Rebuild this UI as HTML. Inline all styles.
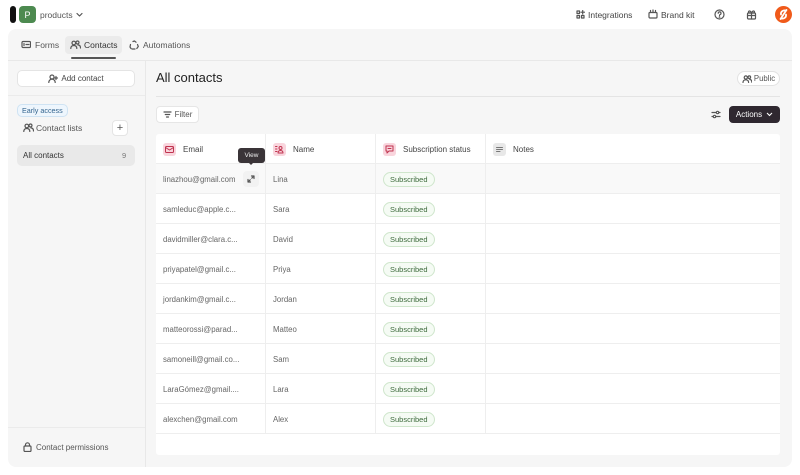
<!DOCTYPE html>
<html><head><meta charset="utf-8"><style>
*{box-sizing:border-box;margin:0;padding:0}
body{width:800px;height:475px;background:#fff;font-family:"Liberation Sans",sans-serif;color:#333;font-size:8px;position:relative;overflow:hidden}
.a{position:absolute}
svg{display:block}
.ic{fill:none;stroke:#555;stroke-width:1.2;stroke-linecap:round;stroke-linejoin:round}
.panel{left:8px;top:29px;width:784px;height:438px;background:#f6f6f6;border-radius:8px}
.cell{position:absolute;height:30px;display:flex;align-items:center;font-size:7.8px;color:#666;border-bottom:1px solid #eee;padding-top:2px}
.badge{border:1px solid #cfe6cc;background:#f5fbf4;color:#3d6b3c;border-radius:9px;padding:2px 6px;font-size:7.5px}
.hic{width:13px;height:13px;border-radius:3px;background:#f9d5dd;display:flex;align-items:center;justify-content:center;margin-right:7px}
</style></head><body>
<div class="a" style="left:10px;top:6px;width:6px;height:17px;background:#111;border-radius:3px"></div>
<div class="a" style="left:19px;top:6px;width:17px;height:17px;background:#4d8a50;border-radius:4px;color:#fff;font-size:9px;display:flex;align-items:center;justify-content:center">P</div>
<div class="a" style="left:40px;top:10px;font-size:8.5px;color:#555">products</div>
<svg class="a ic" style="left:76px;top:12px" width="7" height="6"><path d="M1 1.5l2.5 2.5 2.5-2.5"/></svg>
<svg class="a ic" style="left:576px;top:10px" width="9" height="9"><rect x="1" y="1" width="2.5" height="2.5"/><rect x="1" y="5.5" width="2.5" height="2.5"/><rect x="5.5" y="5.5" width="2.5" height="2.5"/><path d="M6.7 0.5v3.5M5 2.2h3.5"/></svg>
<div class="a" style="left:588px;top:10px;font-size:8.5px;color:#444">Integrations</div>
<svg class="a ic" style="left:648px;top:9px" width="10" height="10"><rect x="1" y="3.5" width="8" height="5.5" rx="1"/><path d="M2.5 3.5v-2M5 3.5v-2.5M7.5 3.5v-2"/></svg>
<div class="a" style="left:661px;top:10px;font-size:8.5px;color:#444">Brand kit</div>
<svg class="a ic" style="left:714px;top:9px" width="11" height="11"><circle cx="5.5" cy="5.5" r="4.5"/><path d="M4.2 4.3a1.4 1.4 0 1 1 1.9 1.3c-.5.2-.6.5-.6 1"/><circle cx="5.5" cy="8.2" r=".3"/></svg>
<svg class="a ic" style="left:746px;top:9px" width="11" height="11"><rect x="1.5" y="4" width="8" height="6" rx="1"/><path d="M5.5 4v6M1.5 6.5h8M5.5 4c-1-2.5-3-2.5-3-1s3 1 3 1c1-2.5 3-2.5 3-1s-3 1-3 1"/></svg>
<div class="a" style="left:775px;top:6px;width:17px;height:17px;border-radius:50%;background:#f05a1a"></div>
<svg class="a" style="left:775px;top:6px" width="17" height="17"><path d="M11 4.5C8 4 5.5 5.5 6 8.5M6 12.5c3 .5 5.5-1 5-4M11.5 4L5.5 13" fill="none" stroke="#fff" stroke-width="1.8" stroke-linecap="round"/></svg>

<div class="a panel"></div>
<svg class="a ic" style="left:21px;top:40px" width="10" height="9"><rect x="1" y="1.5" width="8.5" height="6" rx="1"/><path d="M3 3.5v2M5 4.5h3"/></svg>
<div class="a" style="left:35px;top:40px;font-size:8.5px;color:#555">Forms</div>
<div class="a" style="left:65px;top:36px;width:57px;height:18px;background:#ebebeb;border-radius:4px"></div>
<svg class="a ic" style="left:70px;top:40px" width="11" height="9"><circle cx="3.8" cy="3" r="1.8"/><path d="M0.8 8.5c0-2 1.3-3 3-3s3 1 3 3"/><circle cx="7.5" cy="2.5" r="1.5"/><path d="M8 5c1.5 0 2.5 1 2.5 3"/></svg>
<div class="a" style="left:84px;top:40px;font-size:8.5px;color:#333">Contacts</div>
<div class="a" style="left:71px;top:57px;width:45px;height:2px;background:#555;border-radius:1px"></div>
<svg class="a ic" style="left:129px;top:40px" width="10" height="10"><path d="M4 1.5l1.5-.5 1.5 1.2M8.5 4.5l.8 2-1.5 2M2 8.5l-1-1.5.5-2.5M3 9h3"/></svg>
<div class="a" style="left:143px;top:40px;font-size:8.5px;color:#555">Automations</div>
<div class="a" style="left:8px;top:60px;width:784px;height:1px;background:#e8e8e8"></div>
<div class="a" style="left:145px;top:61px;width:1px;height:406px;background:#e8e8e8"></div>
<div class="a" style="left:17px;top:70px;width:118px;height:17px;background:#fff;border:1px solid #e4e4e4;border-radius:5px;display:flex;align-items:center;justify-content:center;font-size:8px;color:#444"><svg class="ic" width="10" height="9" style="margin-right:3px"><circle cx="4" cy="3" r="2"/><path d="M0.8 8.5c0-2 1.5-3.3 3.2-3.3s3.2 1.3 3.2 3.3M8 2.5v3M6.5 4h3"/></svg>Add contact</div>
<div class="a" style="left:8px;top:95px;width:137px;height:1px;background:#ebebeb"></div>
<div class="a" style="left:17px;top:104px;padding:1px 4px;border:1px solid #cfe3f3;background:#eef6fd;color:#34658f;border-radius:5px;font-size:7.2px">Early access</div>
<svg class="a ic" style="left:23px;top:123px" width="11" height="9"><circle cx="3.8" cy="3" r="1.8"/><path d="M0.8 8.5c0-2 1.3-3 3-3s3 1 3 3"/><circle cx="7.5" cy="2.5" r="1.5"/><path d="M8 5c1.5 0 2.5 1 2.5 3"/></svg>
<div class="a" style="left:36px;top:123px;font-size:8.5px;color:#555">Contact lists</div>
<div class="a" style="left:112px;top:120px;width:16px;height:16px;background:#fff;border:1px solid #e4e4e4;border-radius:4px;display:flex;align-items:center;justify-content:center;font-size:11px;color:#555">+</div>
<div class="a" style="left:17px;top:145px;width:118px;height:21px;background:#e9e9e9;border-radius:5px"></div>
<div class="a" style="left:23px;top:151px;font-size:8px;color:#333">All contacts</div>
<div class="a" style="left:122px;top:151px;font-size:7.5px;color:#777">9</div>
<div class="a" style="left:8px;top:427px;width:137px;height:1px;background:#ebebeb"></div>
<svg class="a ic" style="left:23px;top:442px" width="9" height="10"><rect x="1" y="4" width="7" height="5.5" rx="1"/><path d="M2.5 4V2.8a2 2 0 0 1 4 0V4"/></svg>
<div class="a" style="left:36px;top:443px;font-size:8px;color:#555">Contact permissions</div>
<div class="a" style="left:156px;top:70px;font-size:13px;color:#222">All contacts</div>
<div class="a" style="left:737px;top:71px;width:43px;height:15px;background:#fff;border:1px solid #e2e2e2;border-radius:8px;display:flex;align-items:center;justify-content:center;font-size:7.8px;color:#555"><svg class="ic" width="10" height="8" style="margin-right:2px"><circle cx="3.8" cy="2.5" r="1.6"/><path d="M1 7.5c0-1.8 1.2-2.7 2.8-2.7s2.8.9 2.8 2.7"/><circle cx="7.3" cy="2.2" r="1.3"/><path d="M7.8 4.5c1.2 0 2 .9 2 2.7"/></svg>Public</div>
<div class="a" style="left:156px;top:96px;width:624px;height:1px;background:#e4e4e4"></div>
<div class="a" style="left:156px;top:106px;width:43px;height:17px;background:#fff;border:1px solid #e6e6e6;border-radius:4px;display:flex;align-items:center;justify-content:center;font-size:8px;color:#555"><svg class="ic" width="9" height="7" style="margin-right:3px"><path d="M1 1h7M2.3 3.5h4.4M3.5 6h2"/></svg>Filter</div>
<svg class="a ic" style="left:711px;top:110px" width="10" height="9"><path d="M1 2.5h8M1 6.5h8"/><circle cx="6.5" cy="2.5" r="1.2" fill="#f6f6f6"/><circle cx="3.5" cy="6.5" r="1.2" fill="#f6f6f6"/></svg>
<div class="a" style="left:729px;top:106px;width:51px;height:17px;background:#2f2830;border-radius:4px;color:#fff;font-size:8px;display:flex;align-items:center;justify-content:center">Actions<svg width="7" height="5" style="margin-left:4px"><path d="M1 1l2.5 2.5L6 1" fill="none" stroke="#fff" stroke-width="1.1"/></svg></div>
<div class="a" style="left:156px;top:134px;width:624px;height:321px;background:#fff;border-radius:3px"></div>
<div id="t"></div>
<div class="a" style="left:238px;top:148px;width:27px;height:15px;background:#3a3438;border-radius:3px;color:#eee;font-size:6.5px;display:flex;align-items:center;justify-content:center">View</div>
<div class="a" style="left:248px;top:162px;width:0;height:0;border-left:3px solid transparent;border-right:3px solid transparent;border-top:3px solid #3a3438"></div>
<div class="a" style="left:243px;top:171px;width:16px;height:16px;background:#f2f2f2;border-radius:4px"></div>
<svg class="a ic" style="left:247px;top:175px" width="8" height="8"><path d="M4.5 1h2.5v2.5M7 1L4.8 3.2M3.5 7H1V4.5M1 7l2.2-2.2"/></svg>
<script>
var e=[["linazhou@gmail.com","Lina"],["samleduc@apple.c...","Sara"],["davidmiller@clara.c...","David"],["priyapatel@gmail.c...","Priya"],["jordankim@gmail.c...","Jordan"],["matteorossi@parad...","Matteo"],["samoneill@gmail.co...","Sam"],["LaraGómez@gmail....","Lara"],["alexchen@gmail.com","Alex"]];
var h='';
var hd=[[156,"Email",'<rect x="1.5" y="2.5" width="8" height="6" rx="1"/><path d="M1.5 3.5l4 2.5 4-2.5"/>'],[266,"Name",'<path d="M1.5 2.5h1.5M1.5 5h1.5M1.5 7.5h1.5"/><circle cx="6.5" cy="4" r="1.5"/><path d="M4 9c0-1.5 1-2.5 2.5-2.5S9 7.5 9 9z"/>'],[376,"Subscription status",'<path d="M2 2h7v5H5l-2 2V7H2z"/><path d="M4 4.5h3"/>'],[486,"Notes",'<path d="M2.5 3.5h6M2.5 5.5h6M2.5 7.5h3.5"/>']];
hd.forEach(function(c,i){var bg=i==3?'#e8e8e8':'#f9d5dd';var st=i==3?'#777':'#c0334f';var w=i==3?294:110;
h+='<div class="cell" style="left:'+c[0]+'px;top:134px;width:'+w+'px;padding-left:7px;color:#444;font-size:8px;'+(i<3?'border-right:1px solid #eee;':'')+'"><div class="hic" style="background:'+bg+'"><svg width="11" height="11" fill="none" stroke="'+st+'" stroke-width="1" stroke-linecap="round" stroke-linejoin="round">'+c[2]+'</svg></div>'+c[1]+'</div>';});
e.forEach(function(r,i){var y=164+i*30;var bg=i==0?'background:#f9f9f9;':'';
h+='<div class="cell" style="'+bg+'left:156px;top:'+y+'px;width:110px;padding-left:7px;border-right:1px solid #eee">'+r[0]+'</div>';
h+='<div class="cell" style="'+bg+'left:266px;top:'+y+'px;width:110px;padding-left:7px;border-right:1px solid #eee">'+r[1]+'</div>';
h+='<div class="cell" style="'+bg+'left:376px;top:'+y+'px;width:110px;padding-left:7px;border-right:1px solid #eee"><span class="badge">Subscribed</span></div>';
h+='<div class="cell" style="'+bg+'left:486px;top:'+y+'px;width:294px"></div>';});
document.getElementById('t').innerHTML=h;
</script>
</body></html>
